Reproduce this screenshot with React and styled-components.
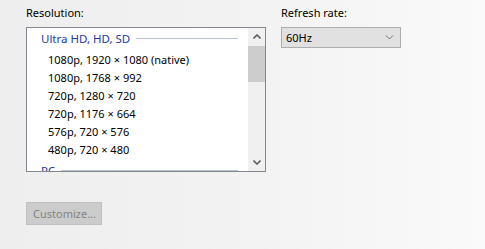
import styled, { createGlobalStyle } from 'styled-components';

const GlobalStyle = createGlobalStyle`
  html, body {
    margin: 0;
    padding: 0;
  }
  body {
    width: 485px;
    height: 249px;
    overflow: hidden;
    background: linear-gradient(to right, #eeeeee 0%, #f3f3f3 55%, #fafafa 100%);
    font-family: "Segoe UI", "Noto Sans", "Open Sans", sans-serif;
    font-size: 11px;
    color: #000;
  }
`;

const Page = styled.div`
  display: flex;
  flex-direction: row;
  gap: 15px;
  padding: 5px 0 0 26px;
`;

const Column = styled.div`
  display: flex;
  flex-direction: column;
  width: ${(p) => p.width}px;
`;

const Label = styled.div`
  height: 16px;
  line-height: 16px;
  margin-bottom: 6px;
`;

const ListBox = styled.div`
  display: flex;
  flex-direction: row;
  height: 143px;
  border: 1px solid #828790;
  background: #fff;
  overflow: hidden;
`;

const ListArea = styled.div`
  flex: 1;
  overflow: hidden;
`;

const GroupHeader = styled.div`
  display: flex;
  align-items: center;
  height: 20px;
  padding-left: 14px;
  margin-top: ${(p) => (p.first ? 0 : 1)}px;
  margin-bottom: 3px;
  color: #1e3c9a;
  font-size: 11.5px;
  &::after {
    content: '';
    flex: 1;
    height: 1px;
    margin: 0 10px 0 6px;
    background: #b9c2d8;
  }
`;

const Item = styled.div`
  height: 18px;
  line-height: 18px;
  padding-left: 21px;
  white-space: nowrap;
`;

const ScrollBar = styled.div`
  display: flex;
  flex-direction: column;
  width: 17px;
  background: #f0f0f0;
`;

const ScrollButton = styled.div`
  display: flex;
  align-items: center;
  justify-content: center;
  height: 17px;
`;

const Thumb = styled.div`
  height: 36px;
  margin-top: 1px;
  background: #cdcdcd;
`;

const Track = styled.div`
  flex: 1;
`;

const Select = styled.div`
  display: flex;
  align-items: center;
  justify-content: space-between;
  box-sizing: border-box;
  width: 120px;
  height: 21px;
  padding: 0 6px 0 4px;
  border: 1px solid #adadad;
  background: #e1e1e1;
`;

const Button = styled.div`
  box-sizing: border-box;
  width: 76px;
  height: 23px;
  margin-top: 30px;
  padding-left: 6px;
  line-height: 21px;
  border: 1px solid #bfbfbf;
  background: #cccccc;
  color: #838383;
`;

const Chevron = ({ up, color = '#606060', w = 8 }) => (
  <svg width={w} height="5" viewBox="0 0 8 5">
    <path
      d={up ? 'M0.5 4.5 L4 1 L7.5 4.5' : 'M0.5 0.5 L4 4 L7.5 0.5'}
      fill="none"
      stroke={color}
      strokeWidth={up === undefined ? 1 : 1.6}
    />
  </svg>
);

const resolutions = [
  '1080p, 1920 × 1080 (native)',
  '1080p, 1768 × 992',
  '720p, 1280 × 720',
  '720p, 1176 × 664',
  '576p, 720 × 576',
  '480p, 720 × 480',
];

export default function App() {
  return (
    <>
      <GlobalStyle />
      <Page>
        <Column width={240}>
          <Label>Resolution:</Label>
          <ListBox>
            <ListArea>
              <GroupHeader first>Ultra HD, HD, SD</GroupHeader>
              {resolutions.map((r) => (
                <Item key={r}>{r}</Item>
              ))}
              <GroupHeader>PC</GroupHeader>
              <Item>1920 × 1080</Item>
            </ListArea>
            <ScrollBar>
              <ScrollButton>
                <Chevron up />
              </ScrollButton>
              <Thumb />
              <Track />
              <ScrollButton>
                <Chevron up={false} />
              </ScrollButton>
            </ScrollBar>
          </ListBox>
          <Button>Customize...</Button>
        </Column>
        <Column width={120}>
          <Label>Refresh rate:</Label>
          <Select>
            <span>60Hz</span>
            <Chevron color="#707070" w={9} />
          </Select>
        </Column>
      </Page>
    </>
  );
}
